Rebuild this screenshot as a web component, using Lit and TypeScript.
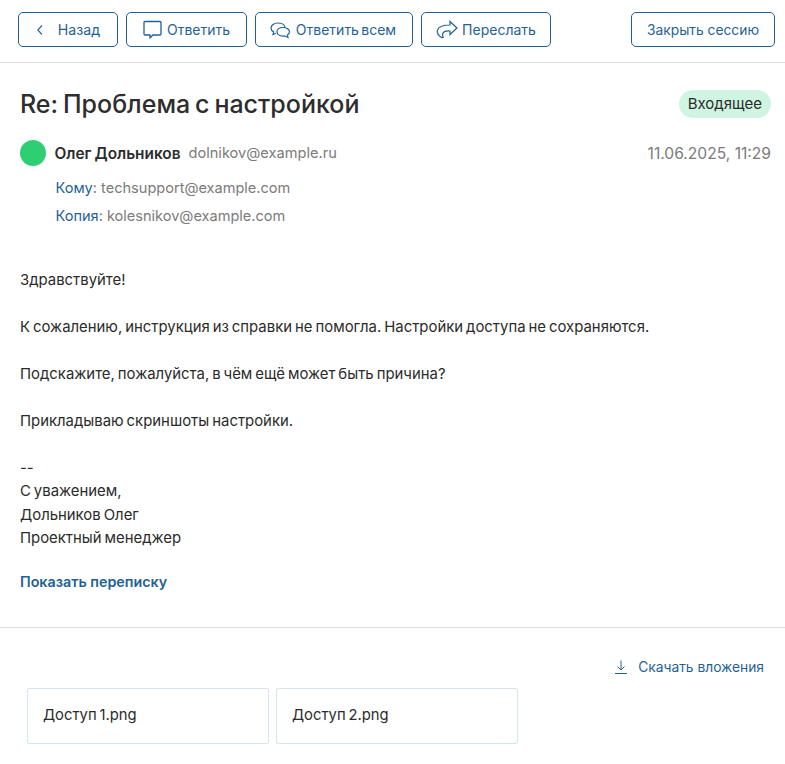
import { LitElement, html, css } from "lit";
import { customElement } from "lit/decorators.js";

@customElement("app-root")
export class AppRoot extends LitElement {
  static styles = css`
    :host { display: block; width: 785px; height: 764px; background: #fff; color: #2b2b2b; font-family: Inter, "Noto Sans", sans-serif; font-size: 14.9px; word-spacing: -1.2px; overflow: hidden; }
    .toolbar { display: flex; align-items: center; gap: 8px; padding: 0 10px 3px 18px; box-sizing: border-box; border-bottom: 1px solid #dfdfdf; height: 63px; word-spacing: 0; }
    .btn { display: flex; align-items: center; justify-content: center; gap: 5px; height: 35px; box-sizing: border-box; border: 1px solid #1d6198; border-radius: 5px; color: #1f6298; background: #fff; font: inherit; font-size: 14px; padding: 0; }
    .btn svg { display: block; flex: none; }
    .back { width: 100px; gap: 14px; font-size: 14.2px; }
    .reply { width: 121px; }
    .all { width: 158px; word-spacing: -1.6px; padding-right: 2px; }
    .fwd { width: 130px; gap: 4px; }
    .close { width: 144px; margin-left: auto; font-size: 13.8px; }
    .head { display: flex; justify-content: space-between; align-items: center; padding: 0 14px 0 20px; margin-top: 25px; }
    h1 { margin: 0; font-size: 25px; font-weight: 500; line-height: 32px; color: #2d2d2d; word-spacing: -1.8px; }
    .badge { background: #d0f4e2; border-radius: 14px; padding: 0 9px; line-height: 28px; font-size: 15px; }
    .sender { display: flex; align-items: center; padding: 0 14px 0 20px; margin-top: 20px; }
    .dot { width: 26px; height: 26px; border-radius: 50%; background: #2ecf72; margin-right: 8.5px; }
    .name { font-weight: 600; margin-right: 8px; font-size: 15.4px; word-spacing: -0.8px; }
    .mail { color: #7b7b7b; font-size: 14.6px; }
    .date { margin-left: auto; color: #7b7b7b; font-size: 15.6px; word-spacing: 0; }
    .rec { padding-left: 55.5px; color: #7b7b7b; line-height: 28px; font-size: 14.55px; word-spacing: 0; }
    .rec b { font-weight: 400; color: #1f6298; }
    .rec1 { margin-top: 8px; }
    .body { padding-left: 20px; margin-top: 38.5px; line-height: 23.5px; }
    .body p { margin: 0 0 23.5px; }
    .show { display: block; margin: 21.5px 0 0 20px; font-weight: 600; color: #1f6298; line-height: 20px; font-size: 14.3px; word-spacing: 0; }
    .sep { border-top: 1px solid #dfdfdf; margin-top: 35px; }
    .dl { display: flex; justify-content: flex-end; align-items: center; gap: 11px; padding-right: 21px; margin-top: 29px; color: #1f6298; line-height: 20px; font-size: 13.8px; word-spacing: 0; }
    .files { display: flex; gap: 7px; padding-left: 27px; margin-top: 11px; }
    .file { width: 242px; height: 56px; box-sizing: border-box; border: 1px solid #d5e6f3; border-radius: 2px; display: flex; align-items: center; padding: 0 0 2px 15px; word-spacing: -1.3px; font-size: 14.8px; }
  `;

  render() {
    return html`
      <div class="toolbar">
        <button class="btn back">
          <svg width="8" height="12" viewBox="0 0 8 12" fill="none" stroke="#1f6298" stroke-width="1.1"><path d="M6 1.500 1.800 6 6 10.500"/></svg>
          Назад
        </button>
        <button class="btn reply">
          <svg width="19" height="19" viewBox="0 0 19 19" fill="none" stroke="#1f6298" stroke-width="1.3"><path d="M2 1.500h15a1 1 0 0 1 1 1v11.500a1 1 0 0 1-1 1h-7l-3 2.800v-2.800H2a1 1 0 0 1-1-1V2.500a1 1 0 0 1 1-1Z"/></svg>
          Ответить
        </button>
        <button class="btn all">
          <svg width="21" height="18" viewBox="0 0 21 18" fill="none" stroke="#1f6298" stroke-width="1.2"><path d="M6 12.200 3 13.500l.7-2.600C2 10 1 8.700 1 7c0-2.800 3-5 7-5 3.700 0 6.700 1.900 7.100 4.400"/><path d="M13 6.500c3.600 0 6.500 1.900 6.500 4.300 0 1.300-.8 2.500-2.100 3.300l.6 2.400-3.100-1.500c-.6.1-1.200.1-1.900.1-3.600 0-6-1.900-6-4.300s2.400-4.300 6-4.300Z"/></svg>
          Ответить всем
        </button>
        <button class="btn fwd">
          <svg width="22" height="19" viewBox="0 0 22 19" fill="none" stroke="#1f6298" stroke-width="1.2"><path d="M14 1.500 21 8l-7 6.500v-3.500c-3.600-.2-6.800.6-7.400 3-.2 1 .1 2 .6 3.200l-1.700.3C2.500 15.500.8 13 1.400 10.300 2.300 7 7.500 5 14 5Z"/></svg>
          Переслать
        </button>
        <button class="btn close">Закрыть сессию</button>
      </div>
      <div class="head">
        <h1>Re: Проблема с настройкой</h1>
        <span class="badge">Входящее</span>
      </div>
      <div class="sender">
        <span class="dot"></span>
        <span class="name">Олег Дольников</span>
        <span class="mail">dolnikov@example.ru</span>
        <span class="date">11.06.2025, 11:29</span>
      </div>
      <div class="rec rec1"><b>Кому</b>: techsupport@example.com</div>
      <div class="rec"><b>Копия</b>: kolesnikov@example.com</div>
      <div class="body">
        <p>Здравствуйте!</p>
        <p>К сожалению, инструкция из справки не помогла. Настройки доступа не сохраняются.</p>
        <p>Подскажите, пожалуйста, в чём ещё может быть причина?</p>
        <p>Прикладываю скриншоты настройки.</p>
        <div>--<br />С уважением,<br />Дольников Олег<br />Проектный менеджер</div>
      </div>
      <a class="show">Показать переписку</a>
      <div class="sep"></div>
      <div class="dl">
        <svg width="12" height="14" viewBox="0 0 12 14" fill="none" stroke="#1f6298" stroke-width="1"><path d="M6 .500v9.500M2.500 6.500 6 10l3.500-3.500M0 13.500h12"/></svg>
        Скачать вложения
      </div>
      <div class="files">
        <div class="file">Доступ 1.png</div>
        <div class="file">Доступ 2.png</div>
      </div>
    `;
  }
}
